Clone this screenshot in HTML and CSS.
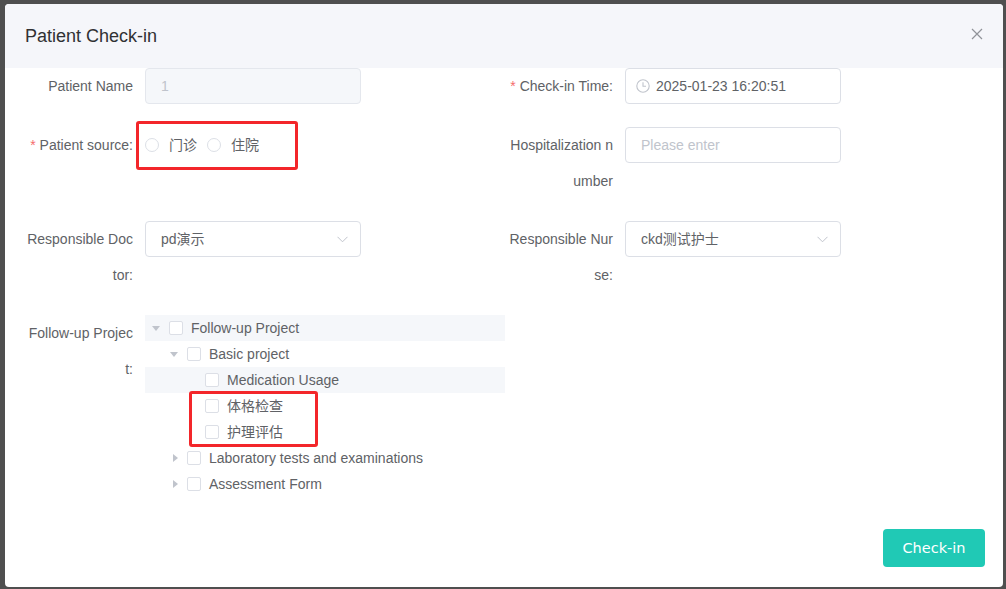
FILE: index.html
```html
<!DOCTYPE html>
<html lang="en">
  <head>
    <meta charset="UTF-8" />
    <title>Patient Check-in</title>
    <link rel="stylesheet" href="styles.css">
  </head>
  <body>
    <div class="dialog">
      <div class="dialog-header">
        <span class="dialog-title">Patient Check-in</span>
        <svg class="close-btn" width="12" height="12" viewBox="0 0 12 12">
          <path d="M1 1 L11 11 M11 1 L1 11" stroke="#909399" stroke-width="1.2" fill="none" />
        </svg>
      </div>

      <div class="dialog-body">
        <div class="form">
          <div class="form-item">
            <label class="form-label">Patient Name</label>
            <div class="form-content">
              <div class="input is-disabled">1</div>
            </div>
          </div>
          <div class="form-item">
            <label class="form-label"><i class="req">*</i>Check-in Time:</label>
            <div class="form-content">
              <div class="input has-prefix">
                <svg class="prefix-icon" width="14" height="14" viewBox="0 0 14 14">
                  <circle cx="7" cy="7" r="6.2" stroke="#c0c4cc" stroke-width="1.1" fill="none" />
                  <path d="M7 3.2 V7.3 H10" stroke="#c0c4cc" stroke-width="1.1" fill="none" />
                </svg>
                2025-01-23 16:20:51
              </div>
            </div>
          </div>

          <div class="form-item">
            <label class="form-label"><i class="req">*</i>Patient source:</label>
            <div class="form-content">
              <div class="radio-group">
                <span class="radio"><span class="radio-inner"></span><span class="radio-label">门诊</span></span>
                <span class="radio"><span class="radio-inner"></span><span class="radio-label">住院</span></span>
              </div>
            </div>
          </div>
          <div class="form-item">
            <label class="form-label">Hospitalization number</label>
            <div class="form-content">
              <div class="input placeholder">Please enter</div>
            </div>
          </div>

          <div class="form-item">
            <label class="form-label">Responsible Doctor:</label>
            <div class="form-content">
              <div class="input select">
                pd演示
                <svg class="arrow" width="11" height="7" viewBox="0 0 11 7">
                  <path d="M0.5 0.8 L5.5 5.8 L10.5 0.8" stroke="#c0c4cc" stroke-width="1" fill="none" />
                </svg>
              </div>
            </div>
          </div>
          <div class="form-item">
            <label class="form-label">Responsible Nurse:</label>
            <div class="form-content">
              <div class="input select">
                ckd测试护士
                <svg class="arrow" width="11" height="7" viewBox="0 0 11 7">
                  <path d="M0.5 0.8 L5.5 5.8 L10.5 0.8" stroke="#c0c4cc" stroke-width="1" fill="none" />
                </svg>
              </div>
            </div>
          </div>

          <div class="form-item">
            <label class="form-label">Follow-up Project:</label>
            <div class="form-content">
              <div class="tree">
                <div class="tree-node is-current lv1"><span class="caret down"></span><span class="checkbox"></span>Follow-up Project</div>
                <div class="tree-node lv2"><span class="caret down"></span><span class="checkbox"></span>Basic project</div>
                <div class="tree-node is-hover lv3"><span class="caret leaf"></span><span class="checkbox"></span>Medication Usage</div>
                <div class="tree-node lv3"><span class="caret leaf"></span><span class="checkbox"></span>体格检查</div>
                <div class="tree-node lv3"><span class="caret leaf"></span><span class="checkbox"></span>护理评估</div>
                <div class="tree-node lv2"><span class="caret right"></span><span class="checkbox"></span>Laboratory tests and examinations</div>
                <div class="tree-node lv2"><span class="caret right"></span><span class="checkbox"></span>Assessment Form</div>
              </div>
            </div>
          </div>
        </div>
      </div>

      <div class="dialog-footer">
        <button class="btn-primary">Check-in</button>
      </div>

      <div class="mark mark-source"></div>
      <div class="mark mark-items"></div>
    </div>
  </body>
</html>
```

FILE: styles.css
```css
body {
  margin: 0;
  height: 589px;
  overflow: hidden;
  background-color: #4f4f4f;
  font-family: "Liberation Sans", Arial, "Noto Sans CJK SC", sans-serif;
  font-size: 14px;
  color: #606266;
}

.dialog {
  position: relative;
  margin: 4px 3px 0 5px;
  height: 583px;
  background-color: #fff;
  border-radius: 4px;
  display: flex;
  flex-direction: column;
}

.dialog-header {
  height: 64px;
  padding: 0 20px;
  background-color: #f5f6fa;
  border-radius: 4px 4px 0 0;
  display: flex;
  align-items: center;
  justify-content: space-between;
}
.dialog-title {
  font-size: 18px;
  color: #303133;
}
.close-btn {
  margin-top: -4px;
}

.dialog-body {
  flex: 1;
  padding: 0 20px;
}

.form {
  display: grid;
  grid-template-columns: 480px 480px;
}

.form-item {
  display: flex;
  align-items: flex-start;
  margin-bottom: 22px;
}
.form-item:nth-child(-n+2) {
  margin-bottom: 23px;
}
.form-label {
  width: 120px;
  flex-shrink: 0;
  box-sizing: border-box;
  padding-right: 12px;
  text-align: right;
  line-height: 36px;
  word-break: break-all;
}
.req {
  font-style: normal;
  color: #f56c6c;
  margin-right: 4px;
}
.form-content {
  flex: 1;
  line-height: 36px;
}

.input {
  width: 216px;
  height: 36px;
  box-sizing: border-box;
  padding: 0 15px;
  border: 1px solid #dcdfe6;
  border-radius: 4px;
  line-height: 34px;
  color: #606266;
  display: flex;
  align-items: center;
}
.input.is-disabled {
  background-color: #f5f7fa;
  border-color: #e4e7ed;
  color: #c0c4cc;
}
.input.placeholder {
  color: #c0c4cc;
}
.input.has-prefix {
  padding-left: 10px;
  gap: 6px;
}
.input.select {
  justify-content: space-between;
  padding-right: 12px;
}

.radio-group {
  display: flex;
  align-items: center;
  height: 36px;
}
.radio {
  display: flex;
  align-items: center;
  margin-right: 10px;
}
.radio-inner {
  width: 14px;
  height: 14px;
  box-sizing: border-box;
  border: 1px solid #dcdfe6;
  border-radius: 50%;
}
.radio-label {
  padding-left: 10px;
}

.tree {
  width: 360px;
  line-height: 26px;
}
.tree-node {
  height: 26px;
  display: flex;
  align-items: center;
}
.tree-node.is-current,
.tree-node.is-hover {
  background-color: #f5f7fa;
}
.tree-node.lv2 {
  padding-left: 18px;
}
.tree-node.lv3 {
  padding-left: 36px;
}

.caret {
  width: 24px;
  height: 26px;
  position: relative;
  flex-shrink: 0;
}
.caret.down::after {
  content: "";
  position: absolute;
  left: 7px;
  top: 11px;
  border-left: 4px solid transparent;
  border-right: 4px solid transparent;
  border-top: 5px solid #c0c4cc;
}
.caret.right::after {
  content: "";
  position: absolute;
  left: 10px;
  top: 9px;
  border-top: 4px solid transparent;
  border-bottom: 4px solid transparent;
  border-left: 5px solid #c0c4cc;
}

.checkbox {
  width: 14px;
  height: 14px;
  box-sizing: border-box;
  border: 1px solid #dcdfe6;
  border-radius: 2px;
  background-color: #fff;
  margin-right: 8px;
  flex-shrink: 0;
}

.dialog-footer {
  display: flex;
  justify-content: flex-end;
  padding: 10px 18px 20px;
}
.btn-primary {
  width: 102px;
  height: 38px;
  border: none;
  border-radius: 4px;
  background-color: #20c9b5;
  color: #fff;
  font-family: "DejaVu Sans", Verdana, sans-serif;
  font-size: 14.5px;
  cursor: pointer;
}

/* red review marks drawn on top */
.mark {
  position: absolute;
  border: 3px solid #f3262a;
  border-radius: 3px;
  box-sizing: border-box;
}
.mark-source {
  left: 131px;
  top: 117px;
  width: 162px;
  height: 49px;
}
.mark-items {
  left: 184px;
  top: 387px;
  width: 129px;
  height: 56px;
}
```
